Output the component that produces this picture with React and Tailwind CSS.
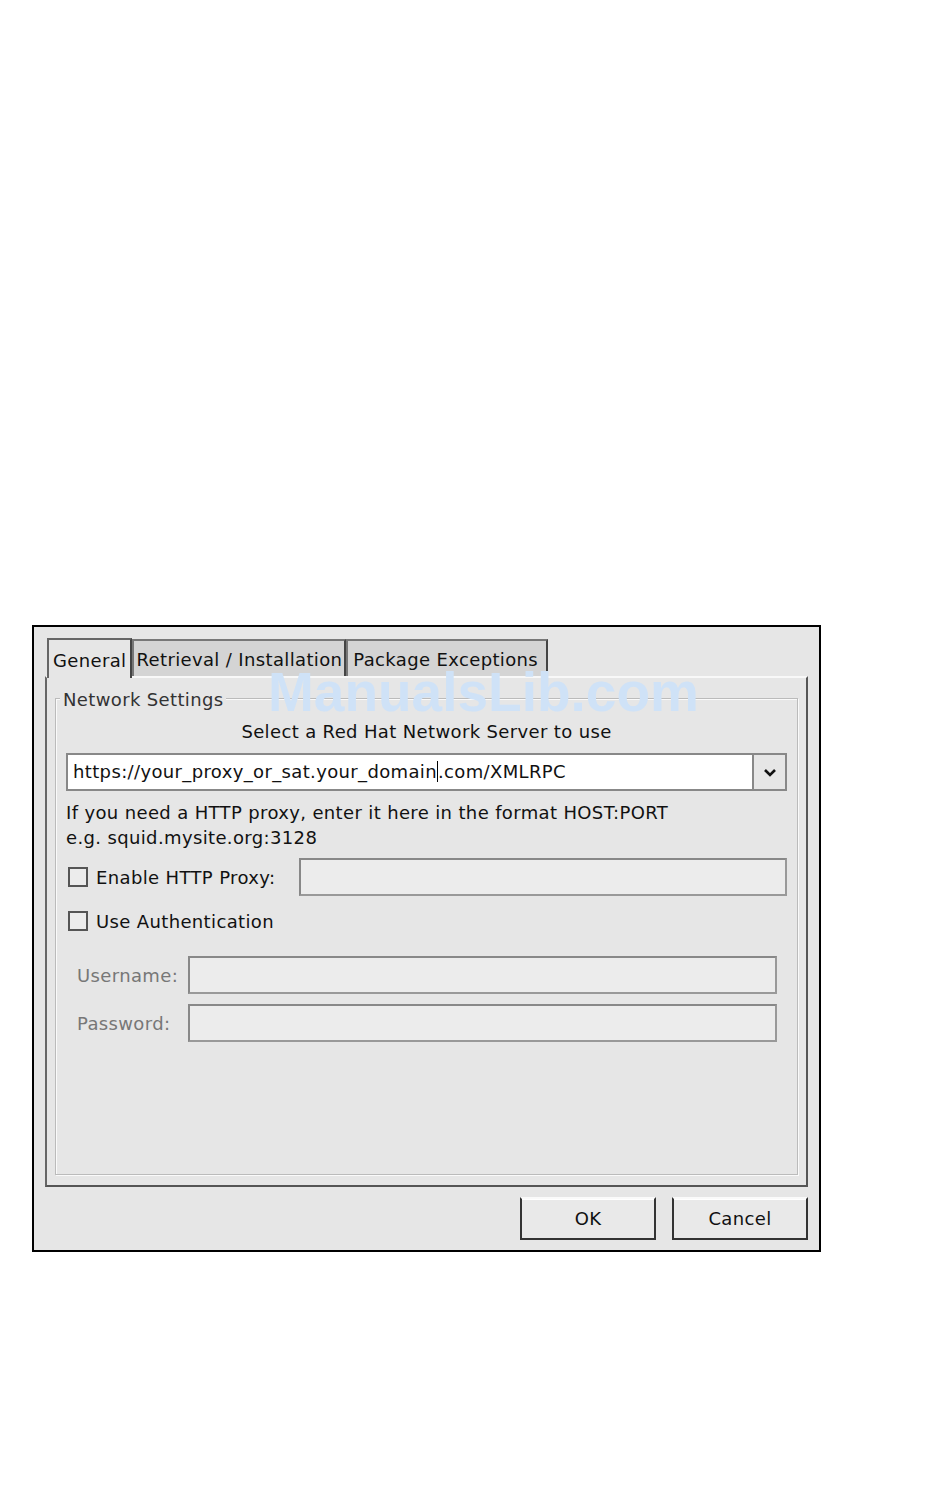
import React from 'react';

const font = { fontFamily: '"DejaVu Sans", Verdana, sans-serif' };

function Check({ label }) {
  return (
    <label className="flex items-center gap-[8px]">
      <span className="block w-[20px] h-[20px] border-2 border-[#555] bg-[#ececec]" />
      <span>{label}</span>
    </label>
  );
}

function Entry({ className = '' }) {
  return (
    <div className={`h-[38px] border-2 border-t-[#888] border-l-[#888] border-b-[#999] border-r-[#999] bg-[#ececec] ${className}`} />
  );
}

function Tab({ label, active, pad = 'px-[3px]' }) {
  return (
    <div
      className={
        active
          ? `h-[40px] ${pad} pt-[7px] border-2 border-b-0 border-t-[#666] border-l-[#666] border-r-[#444] bg-[#e6e6e6] -mb-[2px] relative z-10`
          : `h-[37px] ${pad} pt-[5px] border-2 border-b-0 border-t-[#777] border-l-[#777] border-r-[#444] bg-[#d4d4d4]`
      }
    >
      {label}
    </div>
  );
}

export default function App() {
  return (
    <div className="min-h-[1494px] bg-white pt-[625px] pl-[32px] text-[18px] tracking-[0.02em] text-[#111]" style={font}>
      <div className="relative w-[789px] h-[627px] border-2 border-black bg-[#e6e6e6] px-[11px] pt-[11px] flex flex-col">
        {/* tabs */}
        <div className="flex items-end pl-[2px]">
          <Tab label="General" active pad="px-[4px]" />
          <Tab label="Retrieval / Installation" pad="px-[2px]" />
          <Tab label="Package Exceptions" pad="pl-[5px] pr-[8px]" />
        </div>

        {/* notebook page */}
        <div className="h-[511px] border-2 border-t-[#f8f8f8] border-l-[#666] border-r-[#555] border-b-[#555] px-[8px] pt-[20px]">
          <div className="relative h-[477px] border border-[#bbb] shadow-[inset_1px_1px_0_#fafafa,1px_1px_0_#fafafa] px-[10px] pt-[21px]">
            <div className="absolute -top-[13px] left-[4px] px-[3px] bg-[#e6e6e6] text-[#333]">Network Settings</div>

            <div className="text-center leading-[24px]">Select a Red Hat Network Server to use</div>

            <div className="mt-[9px] flex h-[38px] border-2 border-[#888]">
              <div className="flex-1 bg-white pl-[5px] leading-[34px] whitespace-nowrap">
                https://your_proxy_or_sat.your_domain<span className="border-l border-black">.com/XMLRPC</span>
              </div>
              <div className="w-[33px] border-l-2 border-[#888] bg-[#e6e6e6] flex items-center justify-center">
                <svg width="12" height="9" viewBox="0 0 12 9">
                  <path d="M1 2 L6 7 L11 2" fill="none" stroke="#111" strokeWidth="2.6" />
                </svg>
              </div>
            </div>

            <div className="mt-[9px] leading-[25px]">
              <div>If you need a HTTP proxy, enter it here in the format HOST:PORT</div>
              <div>e.g. squid.mysite.org:3128</div>
            </div>

            <div className="mt-[8px] flex items-center gap-[24px] pl-[2px]">
              <Check label="Enable HTTP Proxy:" />
              <Entry className="flex-1" />
            </div>

            <div className="mt-[9px] pl-[2px] h-[32px] flex items-center">
              <Check label="Use Authentication" />
            </div>

            <div className="mt-[19px] pl-[11px] pr-[10px] grid grid-cols-[auto_1fr] gap-x-[10px] gap-y-[10px] items-center text-[#777]">
              <div>Username:</div>
              <Entry />
              <div>Password:</div>
              <Entry />
            </div>
          </div>
        </div>

        {/* buttons */}
        <div className="flex justify-end gap-[16px] mt-[10px]">
          <button className="w-[136px] h-[43px] border-2 border-t-[#fafafa] border-l-[#333] border-r-[#333] border-b-[#333] bg-[#e9e9e9] shadow-[inset_0_1px_0_#fff]">OK</button>
          <button className="w-[136px] h-[43px] border-2 border-t-[#fafafa] border-l-[#333] border-r-[#333] border-b-[#333] bg-[#e9e9e9] shadow-[inset_0_1px_0_#fff]">Cancel</button>
        </div>

        {/* watermark */}
        <div
          className="absolute left-[234px] top-[46px] text-[55px] font-bold leading-[38px] tracking-normal text-[#cfe2f7] pointer-events-none"
          style={{ fontFamily: '"Liberation Sans", Arial, sans-serif' }}
        >
          ManualsLib.com
        </div>
      </div>
    </div>
  );
}
